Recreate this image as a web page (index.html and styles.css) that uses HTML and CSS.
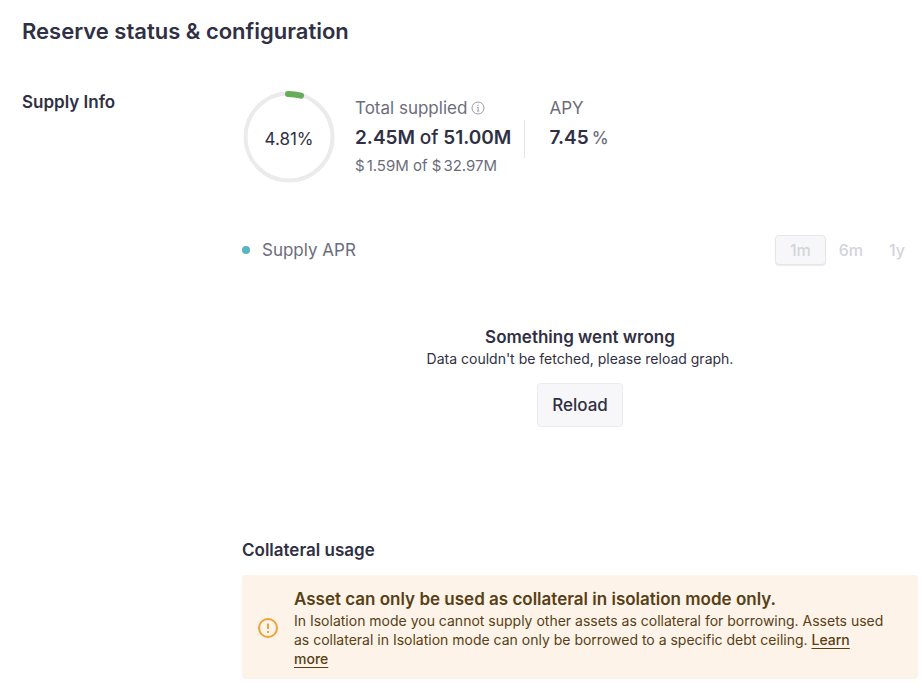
FILE: index.html
```html
<!DOCTYPE html>
<html lang="en">
<head>
    <meta charset="UTF-8">
    <meta name="viewport" content="width=device-width, initial-scale=1.0">
    <title>Reserve status &amp; configuration</title>
    <link rel="stylesheet" href="styles.css">
</head>
<body>
    <h1>Reserve status &amp; configuration</h1>

    <section class="reserve">
        <h2 class="section-title">Supply Info</h2>

        <div class="content">
            <div class="summary">
                <div class="ring">
                    <svg viewBox="0 0 92 92" width="92" height="92" aria-hidden="true">
                        <circle cx="46" cy="46" r="43.500" fill="none" stroke="#ebebeb" stroke-width="4"/>
                        <path d="M45 3Q52 3 58 4.700" fill="none" stroke="#65ad58" stroke-width="6" stroke-linecap="round"/>
                    </svg>
                    <span class="ring-value">4.81%</span>
                </div>
                <div class="stat supplied">
                    <div class="label">Total supplied
                        <svg viewBox="0 0 14 14" width="14" height="14" fill="none" stroke="#9a9daa" aria-hidden="true">
                            <circle cx="7" cy="7" r="6"/>
                            <path d="M6 6.500h1.200v3.500M6 10h2.400M7 3.700v1.300"/>
                        </svg>
                    </div>
                    <div class="value">2.45M <span>of</span> 51.00M</div>
                    <div class="usd"><span>$</span>1.59M of <span>$</span>32.97M</div>
                </div>
                <div class="divider"></div>
                <div class="stat">
                    <div class="label">APY</div>
                    <div class="value">7.45<span class="percent">%</span></div>
                </div>
            </div>

            <div class="graph-header">
                <div class="legend"><span class="dot"></span>Supply APR</div>
                <div class="ranges">
                    <button class="range active" disabled>1m</button>
                    <button class="range" disabled>6m</button>
                    <button class="range" disabled>1y</button>
                </div>
            </div>

            <div class="graph-error">
                <h3>Something went wrong</h3>
                <p>Data couldn't be fetched, please reload graph.</p>
                <button class="reload">Reload</button>
            </div>

            <h2>Collateral usage</h2>
            <div class="alert">
                <svg viewBox="0 0 22 22" width="22" height="22" fill="none" stroke="#eda33b" stroke-width="2" aria-hidden="true">
                    <circle cx="11" cy="11" r="9"/>
                    <path d="M11 6.500v5.500M11 14v2"/>
                </svg>
                <div>
                    <h3>Asset can only be used as collateral in isolation mode only.</h3>
                    <p>In Isolation mode you cannot supply other assets as collateral for borrowing. Assets used as collateral in Isolation mode can only be borrowed to a specific debt ceiling. <a href="#">Learn more</a></p>
                </div>
            </div>
        </div>
    </section>
</body>
</html>
```
FILE: styles.css
```css
* {
    box-sizing: border-box;
}

body {
    margin: 0;
    padding: 16px 4px 10px 22px;
    background: #fff;
    color: #303045;
    font-family: Inter, sans-serif;
    font-size: 14px;
    line-height: 20px;
}

h1, h2, h3, p {
    margin: 0;
}

h1 {
    font-size: 22px;
    line-height: 30px;
    font-weight: 600;
}

h2, h3 {
    font-size: 17px;
    line-height: 24px;
    font-weight: 600;
}

button {
    font-family: inherit;
    font-size: 17px;
    font-weight: 500;
}

.reserve {
    display: grid;
    grid-template-columns: 220px 1fr;
    margin-top: 44px;
}

.summary {
    display: flex;
    padding-left: 1px;
}

.ring {
    display: grid;
    place-items: center;
    width: 92px;
    height: 94px;
}

.ring svg, .ring-value {
    grid-area: 1 / 1;
}

.ring-value {
    padding-top: 4px;
    font-size: 17px;
}

.stat {
    padding-top: 4px;
}

.supplied {
    margin-left: 20px;
}

.divider {
    width: 1px;
    height: 38px;
    margin: 30px 24px 0 13px;
    background: #e5e5ea;
}

.label {
    display: flex;
    align-items: center;
    gap: 4px;
    color: #6b6d7c;
    font-size: 17px;
    line-height: 28px;
}

.value {
    font-size: 19px;
    line-height: 32px;
    font-weight: 600;
}

.value span {
    font-weight: 500;
}

.value .percent {
    margin-left: 3px;
    color: #6b6d7c;
    font-size: 17px;
}

.usd {
    color: #6b6d7c;
    font-size: 15px;
    line-height: 24px;
}

.usd span {
    margin-right: 2px;
}

.graph-header {
    display: flex;
    justify-content: space-between;
    align-items: center;
    margin-top: 51px;
}

.legend {
    display: flex;
    align-items: center;
    color: #6b6d7c;
    font-size: 17px;
}

.dot {
    width: 8px;
    height: 8px;
    margin-right: 12px;
    border-radius: 50%;
    background: #55b4c6;
}

.ranges {
    display: flex;
}

.range {
    height: 30px;
    padding: 0 13px;
    border: 1px solid transparent;
    border-radius: 4px;
    background: none;
    color: #d3d4da;
    font-size: 16px;
}

.range.active {
    padding: 0 14px;
    border-color: #e5e6ea;
    background: #f7f7f9;
    box-shadow: 0 1px 1px #ebebef;
}

.range + .range {
    padding: 0 12px;
}

.graph-error {
    display: flex;
    flex-direction: column;
    align-items: center;
    margin: 60px 0 111px;
}

.reload {
    height: 44px;
    margin-top: 14px;
    padding: 0 14px;
    border: 1px solid #ebebef;
    border-radius: 4px;
    background: #f7f7f9;
    color: #303045;
}

.alert {
    display: flex;
    align-items: center;
    gap: 15px;
    margin-top: 13px;
    padding: 12px 32px 11px 15px;
    border-radius: 4px;
    background: #fdf3e8;
    color: #573f16;
}

.alert svg {
    flex: none;
}

.alert p {
    line-height: 19px;
}

.alert a {
    color: inherit;
    font-weight: 500;
    text-underline-offset: 3px;
}
```
